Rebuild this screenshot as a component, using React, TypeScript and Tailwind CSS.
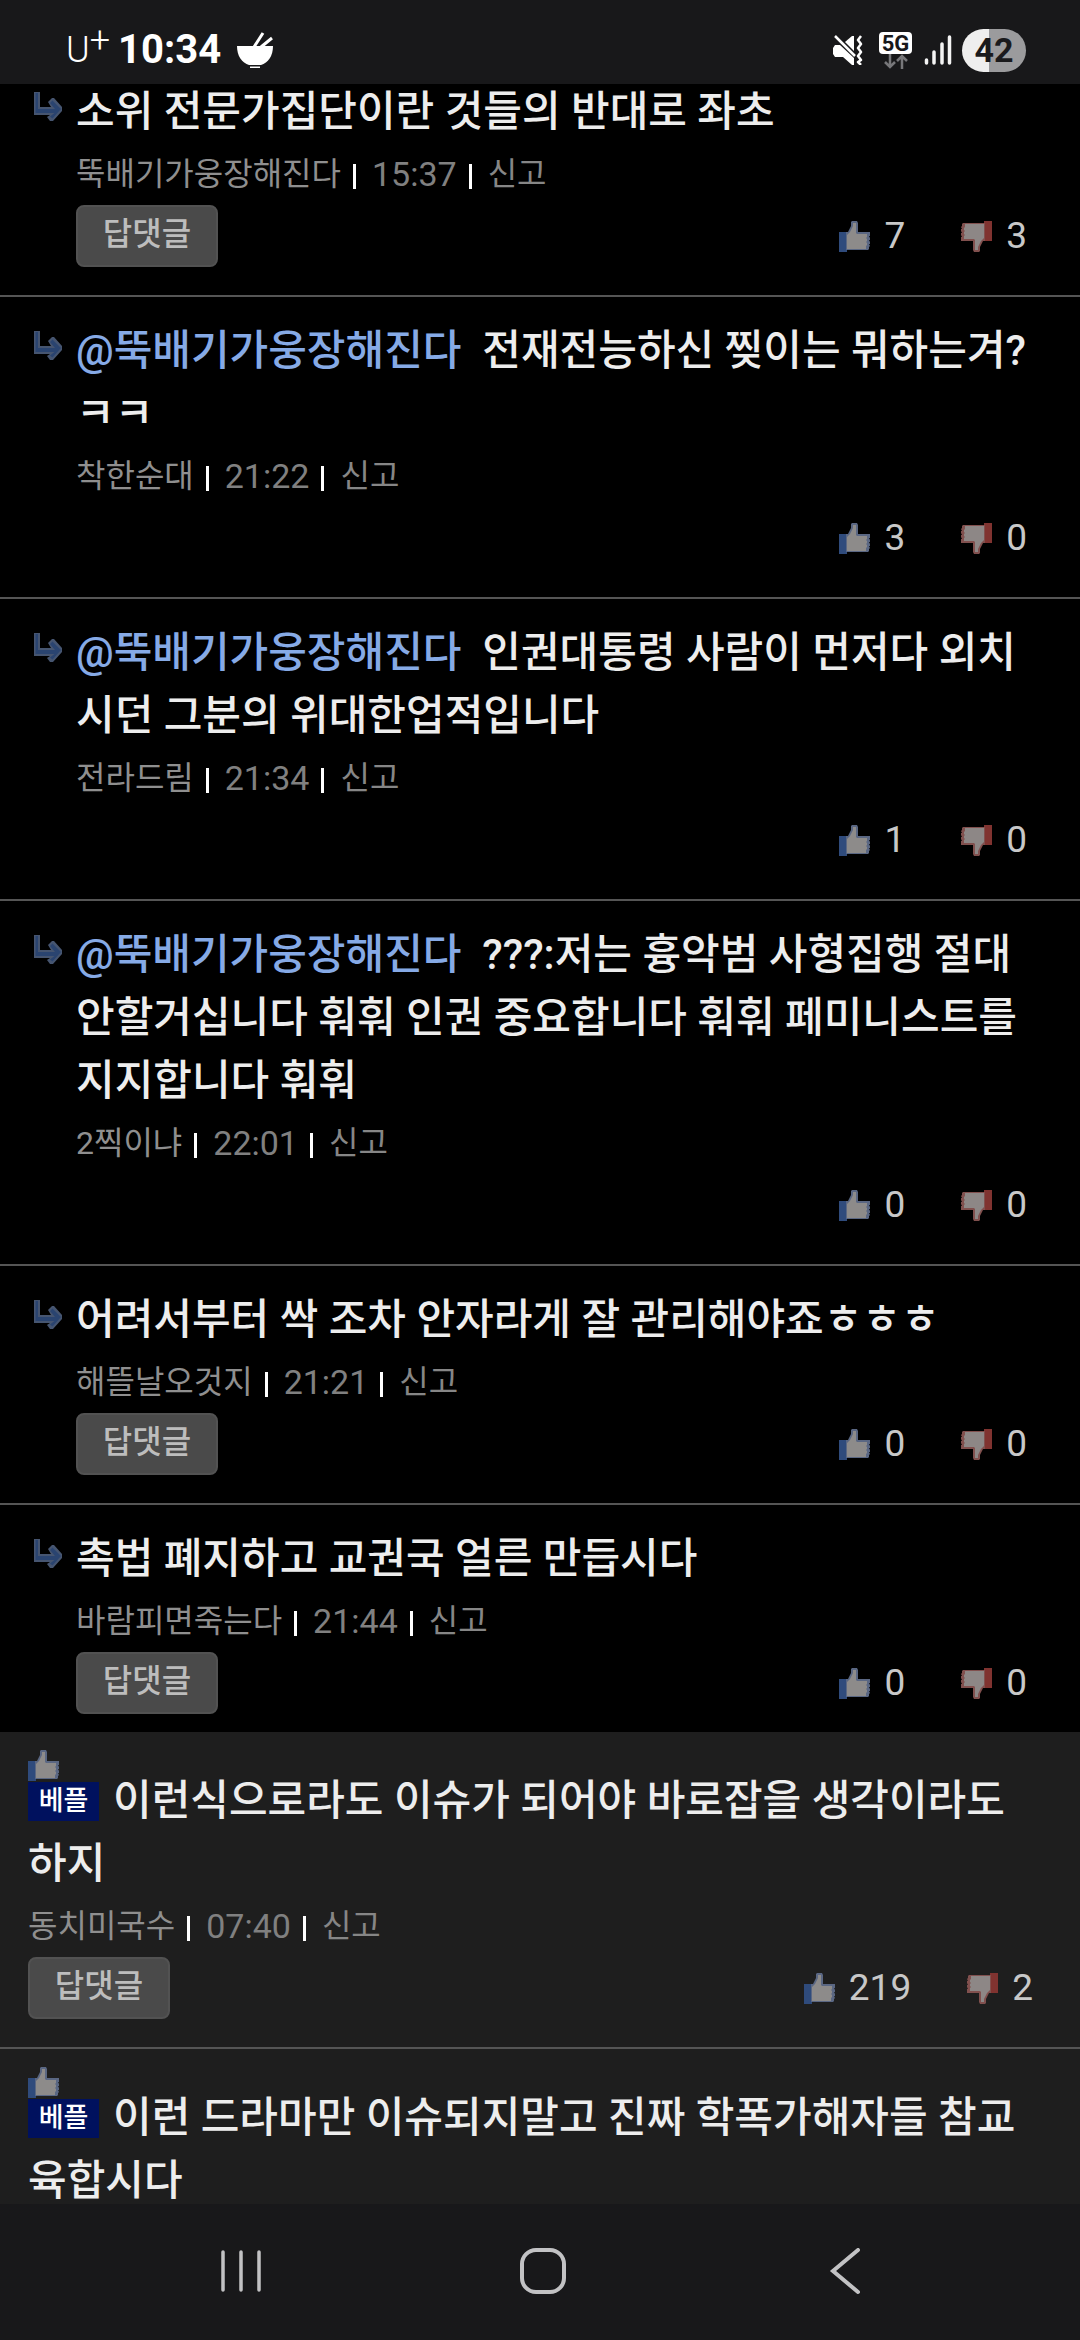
import { ReactNode } from "react";

type Votes = {
  up: number;
  down: number;
  canReply?: boolean;
};

type Comment = {
  id: number;
  mention?: string;
  text: string;
  author: string;
  time: string;
  votes: Votes;
};

type Best = {
  id: number;
  text: string;
  author?: string;
  time?: string;
  votes?: Votes;
};

const replies: Comment[] = [
  {
    id: 1,
    text: "소위 전문가집단이란 것들의 반대로 좌초",
    author: "뚝배기가웅장해진다",
    time: "15:37",
    votes: { up: 7, down: 3, canReply: true },
  },
  {
    id: 2,
    mention: "@뚝배기가웅장해진다",
    text: "전재전능하신 찢이는 뭐하는겨? ㅋㅋ",
    author: "착한순대",
    time: "21:22",
    votes: { up: 3, down: 0 },
  },
  {
    id: 3,
    mention: "@뚝배기가웅장해진다",
    text: "인권대통령 사람이 먼저다 외치시던 그분의 위대한업적입니다",
    author: "전라드림",
    time: "21:34",
    votes: { up: 1, down: 0 },
  },
  {
    id: 4,
    mention: "@뚝배기가웅장해진다",
    text: "???:저는 흉악범 사형집행 절대 안할거십니다 훠훠 인권 중요합니다 훠훠 페미니스트를 지지합니다 훠훠",
    author: "2찍이냐",
    time: "22:01",
    votes: { up: 0, down: 0 },
  },
  {
    id: 5,
    text: "어려서부터 싹 조차 안자라게 잘 관리해야죠ㅎㅎㅎ",
    author: "해뜰날오것지",
    time: "21:21",
    votes: { up: 0, down: 0, canReply: true },
  },
  {
    id: 6,
    text: "촉법 폐지하고 교권국 얼른 만듭시다",
    author: "바람피면죽는다",
    time: "21:44",
    votes: { up: 0, down: 0, canReply: true },
  },
];

const bestComments: Best[] = [
  {
    id: 7,
    text: "이런식으로라도 이슈가 되어야 바로잡을 생각이라도 하지",
    author: "동치미국수",
    time: "07:40",
    votes: { up: 219, down: 2, canReply: true },
  },
  {
    id: 8,
    text: "이런 드라마만 이슈되지말고 진짜 학폭가해자들 참교육합시다",
  },
];

const ThumbUp = () => (
  <svg viewBox="0 0 31 31" className="block size-[31px]" aria-hidden="true">
    <path d="M0 11h8v20H0z" fill="#2f4b7c" />
    <path
      d="M7 11h2l2-4 1-2V1l1-1h5l1 2v9h12v4h-1l1 2v2h-1l1 2v2h-1l1 2-1 1v2l-1 1H7z"
      fill="#5a6783"
    />
    <path
      d="M8 14l3-3 2-4 1-2V2h3v10l1 1h10v3l-1 1 1 1v2l-1 1 1 1v2l-1 1v3H8z"
      fill="#8d8b8a"
    />
  </svg>
);

const ThumbDown = () => (
  <svg viewBox="0 0 31 31" className="block size-[31px]" aria-hidden="true">
    <g transform="rotate(180 15.5 15.5)">
      <path d="M0 11h8v20H0z" fill="#803330" />
      <path
        d="M7 11h2l2-4 1-2V1l1-1h5l1 2v9h12v4h-1l1 2v2h-1l1 2v2h-1l1 2-1 1v2l-1 1H7z"
        fill="#81504e"
      />
      <path
        d="M8 14l3-3 2-4 1-2V2h3v10l1 1h10v3l-1 1 1 1v2l-1 1 1 1v2l-1 1v3H8z"
        fill="#8d8786"
      />
    </g>
  </svg>
);

const ReplyArrow = () => (
  <svg viewBox="0 0 28 29" className="mt-[34px] h-[29px] w-7 shrink-0" aria-hidden="true">
    <path
      d="M0 0h6v15h11l-3-5 4-4h2l8 9v4l-9 10h-3l-3-4 3-2H0z"
      fill="#465570"
    />
    <path d="M1.500 1h2.500v16h17l-5-6 2.500-2.500L27 17l-8.500 9.500-2.500-2 4.500-3.500h-19z" fill="#2a4470" />
  </svg>
);

const Divider = () => <span className="mt-1 mr-4 ml-3 h-[25px] w-[3px] bg-white" />;

const Meta = ({ author, time }: { author: string; time?: string }) => (
  <div className="mt-2 flex h-[46px] items-center text-[32px] leading-[46px] text-[#8f8f8f]">
    <span>{author}</span>
    <Divider />
    <time className="text-[34px] text-[#808080]">{time}</time>
    <Divider />
    <button type="button" className="text-[#868686]">
      신고
    </button>
  </div>
);

const Actions = ({ up, down, canReply }: Votes) => (
  <div className="mt-2 flex h-[62px] items-center justify-between">
    {canReply ? (
      <button
        type="button"
        className="h-[62px] w-[142px] rounded-lg border-2 border-[#525252] bg-[#4a4a4a] pb-1 text-[32px] leading-[46px] font-medium text-[#bdbdbd]"
      >
        답댓글
      </button>
    ) : (
      <span />
    )}
    <div className="flex gap-14 text-[37px] leading-[46px] text-[#c8c8c8]">
      <button type="button" aria-label="추천" className="flex items-center gap-3.5">
        <ThumbUp />
        {up}
      </button>
      <button type="button" aria-label="반대" className="flex items-center gap-3.5">
        <ThumbDown />
        {down}
      </button>
    </div>
  </div>
);

const Reply = ({ comment }: { comment: Comment }) => (
  <li className="flex gap-3.5 border-b-2 border-[#555] pr-[40px] pb-7 pl-[34px] last:border-b-0 last:pb-[18px]">
    <ReplyArrow />
    <div className="min-w-0 flex-1 pt-[22px]">
      <p className="text-[42px] leading-[63px] font-medium text-[#ededed]">
        {comment.mention && (
          <>
            <a href="#" className="text-[#86aae6]">
              {comment.mention}
            </a>
            &nbsp;{" "}
          </>
        )}
        {comment.text}
      </p>
      <Meta author={comment.author} time={comment.time} />
      <div className="pr-[13px]">
        <Actions {...comment.votes} />
      </div>
    </div>
  </li>
);

const BestComment = ({ comment }: { comment: Best }) => (
  <li className="border-b-2 border-[#555] px-7 pt-[18px] pb-7 last:border-b-0">
    <ThumbUp />
    <p className="-mt-3 pr-3 text-[42px] leading-[63px] font-medium text-[#ededed]">
      <span className="mr-3.5 mb-1 inline-block h-[39px] w-[71px] bg-[#00115e] text-center align-middle text-[27px] leading-[38px] text-white">
        베플
      </span>
      {comment.text}
    </p>
    {comment.author && <Meta author={comment.author} time={comment.time} />}
    {comment.votes && (
      <div className="pr-[19px]">
        <Actions {...comment.votes} />
      </div>
    )}
  </li>
);

const StatusBar = () => (
  <header className="flex h-[84px] shrink-0 items-center justify-between bg-[#18181a] pt-4 pr-[54px] pl-[66px] text-white">
    <div className="flex items-center">
      <span className="flex items-start text-[36px] leading-10 font-light">
        U<span className="leading-5">+</span>
      </span>
      <span className="ml-2 text-[40px] leading-10 font-bold">10:34</span>
      <svg viewBox="0 0 36 36" className="ml-4 size-9" fill="#fff" aria-hidden="true">
        <path d="M0 14h36c0 10-5 17-12 19H12C5 31 0 24 0 14z" />
        <path d="M13 34.500h10V36H13z" />
        <path d="M17 15L26 1M24 15L35 6" stroke="#fff" strokeWidth="3" />
      </svg>
    </div>

    <div className="flex items-center">
      <svg viewBox="0 0 30 30" className="size-[30px]" fill="none" aria-hidden="true">
        <path d="M0 13l2-3h5L21 23v7h-2l-9-8H2l-2-3z" fill="#fff" />
        <path d="M12 7l7-6h2v15z" fill="#fff" />
        <path d="M2 1l20 20" stroke="#fff" strokeWidth="2.500" />
        <path
          d="M28 1l-3 4 3 4-3 4 3 4-3 4 3 4-3 2 3 3"
          stroke="#fff"
          strokeWidth="2.500"
          strokeLinejoin="round"
        />
      </svg>
      <div className="ml-4 flex w-[33px] flex-col items-center">
        <span className="h-[22px] w-full rounded-[4px] bg-white text-center text-[22px] leading-[23px] font-bold text-[#18181a]">
          5G
        </span>
        <svg
          viewBox="0 0 24 15"
          className="h-[15px] w-6"
          fill="none"
          stroke="#77777a"
          strokeWidth="2.500"
          aria-hidden="true"
        >
          <path d="M6 0v13M1 8l5 5 5-5M18 15V2M13 7l5-5 5 5" />
        </svg>
      </div>
      <svg
        viewBox="0 0 28 30"
        className="ml-3 h-[30px] w-7"
        stroke="#f4f4f4"
        strokeWidth="3.500"
        strokeLinecap="round"
        aria-hidden="true"
      >
        <path d="M2.500 25v3M10 17v11M18 9v19M25.500 2v26" />
      </svg>
      <span className="ml-2.5 h-[43px] w-16 rounded-full bg-linear-to-r from-[#eeeeee] from-42% to-[#9b9b9d] to-42% text-center text-[34px] leading-[43px] font-bold text-[#1a1a1c]">
        42
      </span>
    </div>
  </header>
);

const NavButton = ({ label, children }: { label: string; children: ReactNode }) => (
  <button type="button" aria-label={label} className="flex flex-1 items-center justify-center">
    <svg
      viewBox="0 0 48 48"
      className="size-12"
      fill="none"
      stroke="#c2c2c4"
      strokeWidth="4"
      strokeLinecap="round"
      aria-hidden="true"
    >
      {children}
    </svg>
  </button>
);

const NavBar = () => (
  <nav className="flex h-[136px] shrink-0 bg-[#18181a] pr-[84px] pl-[90px]">
    <NavButton label="최근 앱">
      <path d="M6 4v38M24 4v38M42 4v38" strokeWidth="3.500" />
    </NavButton>
    <NavButton label="홈">
      <rect x="3" y="2" width="42" height="42" rx="14" />
    </NavButton>
    <NavButton label="뒤로">
      <path d="M37 2L12 23l25 21" />
    </NavButton>
  </nav>
);

export default function App() {
  return (
    <div className="flex h-screen flex-col overflow-hidden bg-black font-['Roboto','Noto_Sans_CJK_KR',sans-serif]">
      <StatusBar />
      <main className="min-h-0 flex-1 overflow-hidden">
        {/* list is scrolled a little past its first reply */}
        <ul className="-mt-[26px]">
          {replies.map((comment) => (
            <Reply key={comment.id} comment={comment} />
          ))}
        </ul>
        <ul className="bg-[#1e1e1e]">
          {bestComments.map((comment) => (
            <BestComment key={comment.id} comment={comment} />
          ))}
        </ul>
      </main>
      <NavBar />
    </div>
  );
}
